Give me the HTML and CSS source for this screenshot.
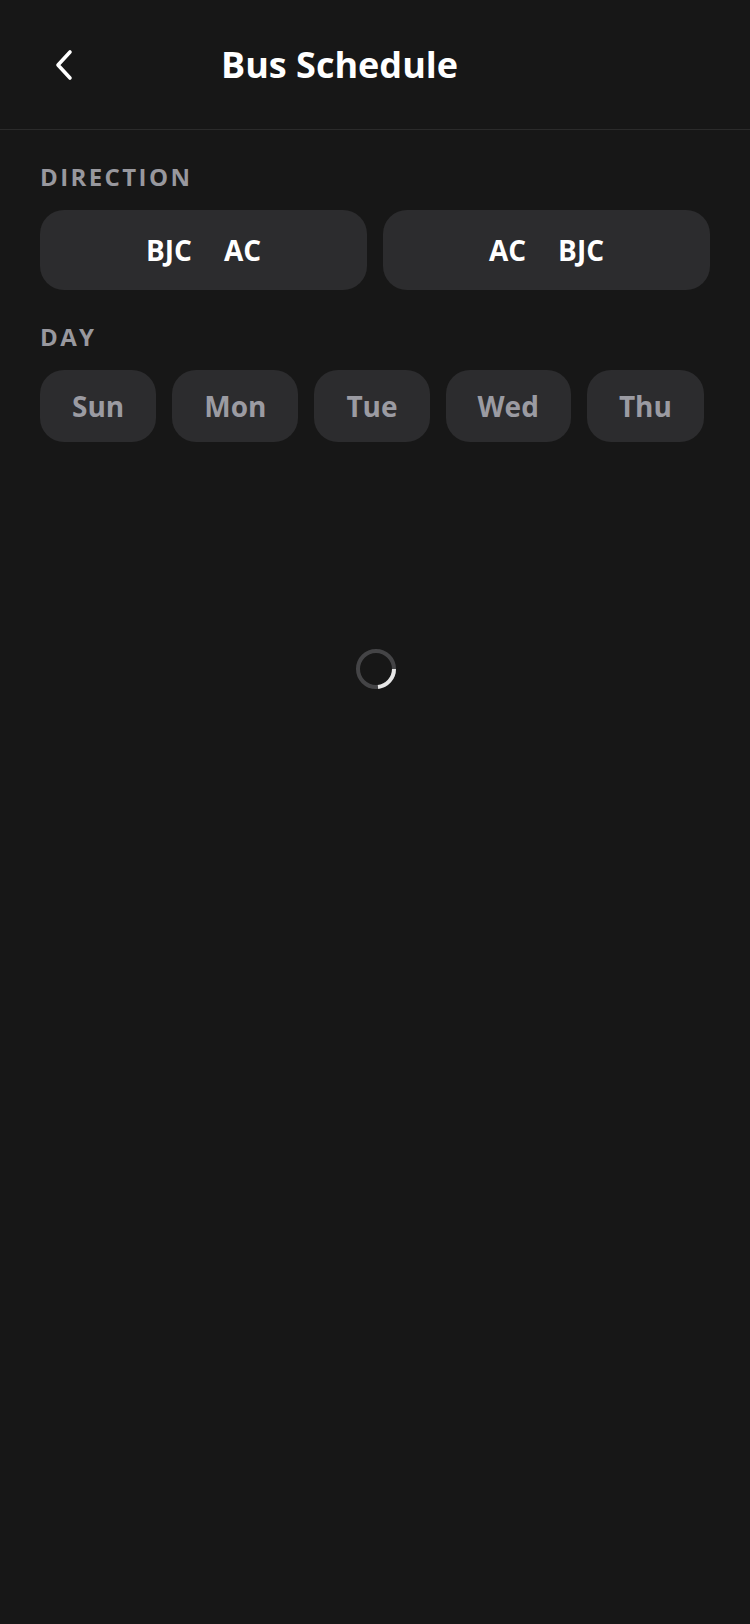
FILE: index.html
```html
<!DOCTYPE html>
<html lang="en">
<head>
<meta charset="utf-8">
<title>Bus Schedule</title>
<link rel="stylesheet" href="styles.css">
</head>
<body>
<div class="app">
  <header class="header">
    <button class="back" aria-label="Back">
      <svg width="22" height="32" viewBox="0 0 22 32" fill="none"><path d="M17 3 L5 16 L17 29" stroke="#ffffff" stroke-width="3.6" stroke-linecap="round" stroke-linejoin="round"/></svg>
    </button>
    <h1 class="title">Bus Schedule</h1>
  </header>
  <main class="content">
    <section class="section">
      <div class="label">DIRECTION</div>
      <div class="dir-row">
        <button class="dir-btn"><span>BJC</span><span class="arrow"></span><span>AC</span></button>
        <button class="dir-btn"><span>AC</span><span class="arrow"></span><span>BJC</span></button>
      </div>
    </section>
    <section class="section day-section">
      <div class="label">DAY</div>
      <div class="day-row">
        <button class="day-pill">Sun</button>
        <button class="day-pill">Mon</button>
        <button class="day-pill">Tue</button>
        <button class="day-pill">Wed</button>
        <button class="day-pill">Thu</button>
      </div>
    </section>
    <div class="loader">
      <svg width="44" height="44" viewBox="0 0 44 44">
        <circle cx="22" cy="22" r="18" fill="none" stroke="#444446" stroke-width="4"/>
        <path d="M40 22 A18 18 0 0 1 24 39.9" fill="none" stroke="#e6e6e6" stroke-width="4"/>
      </svg>
    </div>
  </main>
</div>
</body>
</html>
```
FILE: styles.css
```css
* { box-sizing: border-box; }
html, body {
  margin: 0;
  padding: 0;
  background: #171717;
}
body {
  font-family: "Open Sans", "Noto Sans", sans-serif;
  color: #ffffff;
  width: 750px;
  min-height: 1624px;
}
button {
  font-family: inherit;
  border: none;
  margin: 0;
  cursor: pointer;
}
.header {
  height: 130px;
  border-bottom: 1px solid #2b2b2b;
  display: flex;
  align-items: center;
  padding: 0 0 0 52px;
}
.back {
  background: transparent;
  width: 24px;
  height: 34px;
  padding: 0;
  display: flex;
  align-items: center;
  justify-content: center;
}
.title {
  margin: 0 0 0 145px;
  font-size: 36px;
  font-weight: 700;
  line-height: 48px;
  color: #ffffff;
}
.content {
  padding: 31px 40px 0 40px;
}
.label {
  font-size: 24px;
  font-weight: 700;
  line-height: 32px;
  letter-spacing: 2.4px;
  color: #98989e;
  margin-bottom: 17px;
}
.day-section {
  margin-top: 31px;
}
.dir-row {
  display: flex;
  gap: 16px;
}
.dir-btn {
  flex: 1;
  height: 80px;
  border-radius: 24px;
  background: #2c2c2e;
  color: #ffffff;
  font-size: 28px;
  font-weight: 700;
  display: flex;
  align-items: center;
  justify-content: center;
}
.arrow {
  display: inline-block;
  width: 32px;
}
.day-row {
  display: flex;
  gap: 16px;
  overflow: hidden;
}
.day-pill {
  height: 72px;
  padding: 0 32px;
  border-radius: 24px;
  background: #2c2c2e;
  color: #9b9ba2;
  font-size: 28px;
  font-weight: 700;
  flex: none;
}
.loader {
  display: flex;
  justify-content: center;
  margin-top: 205px;
  padding-left: 2px;
}
```
